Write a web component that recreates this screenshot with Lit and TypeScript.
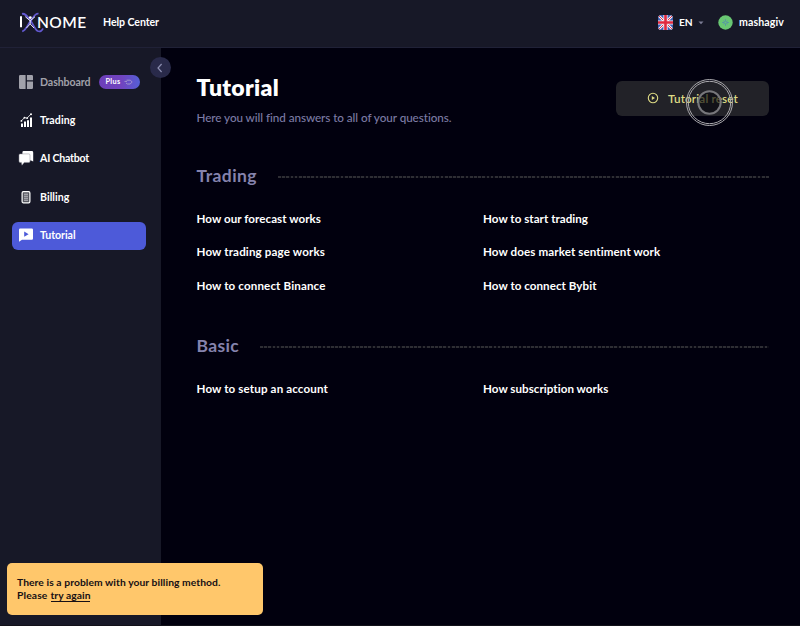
import { LitElement, html, css, svg } from "lit";
import { customElement, property } from "lit/decorators.js";

/* Single line of text tracked so that it fills a given width. */
@customElement("fit-text")
class FitText extends LitElement {
  @property({ type: Number }) w = 0;
  @property() text = "";
  static styles = css`
    :host { display: inline-block; white-space: nowrap; }
    .t { display: inline-block; }
  `;
  render() {
    return html`<span class="t">${this.text}</span>`;
  }
  updated() {
    const el = this.renderRoot.querySelector(".t") as HTMLElement;
    el.style.letterSpacing = "0px";
    const natural = el.getBoundingClientRect().width;
    const gap = (this.w - natural) / this.text.length;
    el.style.letterSpacing = `${gap.toFixed(3)}px`;
  }
}

const t = (text: string, w: number) => html`<fit-text .text=${text} .w=${w}></fit-text>`;

const icons = {
  dashboard: svg`<path d="M0 1.2Q0 0 1.2 0H6.6V14H1.2Q0 14 0 12.8ZM7.9 0H12.8Q14 0 14 1.2V5.2H7.9ZM7.9 6.6H14V12.8Q14 14 12.8 14H7.9Z" fill="#a1a1aa"/>`,
  trading: svg`<path d="M2 10.4h2V14H2zM5 8.4h2V14H5zM8 7.2h2V14H8zM11 4.6h2V14h-2z" fill="#fff"/><path d="M2.2 8 5.6 4.6 8 5.2 12 1" fill="none" stroke="#fff" stroke-width=".8"/><circle cx="2.4" cy="7.9" r=".9" fill="#fff"/><circle cx="5.4" cy="4.7" r=".9" fill="#fff"/><circle cx="8.2" cy="5.1" r=".9" fill="#fff"/><circle cx="12" cy="1.2" r="1" fill="#fff"/>`,
  chat: svg`<path d="M4.6.1H12.8Q14.2.1 14.2 1.5V10.6L12 9.6H4.6Q3.4 9.6 3.4 8.2V1.5Q3.4.1 4.6.1Z" fill="#fff"/><path d="M1.2 2.9H9.8Q11 2.9 11 4.1V10.2Q11 11.4 9.8 11.4H5.2L3 14.2 2.4 11.4H1.2Q0 11.4 0 10.2V4.1Q0 2.9 1.2 2.9Z" fill="#fff" stroke="#8b8b95" stroke-width=".5"/>`,
  billing: svg`<rect x="3.1" y="1.6" width="7.8" height="11.2" rx="1.3" fill="#55565f" stroke="#fff" stroke-width="1.2"/><path d="M5 4.2h4M5 6.2h4M5 8.2h4M5 10.2h4" stroke="#d0d0d6" stroke-width=".9"/>`,
  tutorial: svg`<path d="M1.2.6H12.8Q14 .6 14 1.8V10.6Q14 11.8 12.8 11.8H3L0 13.8V1.8Q0 .6 1.2.6Z" fill="#fff"/><path d="M5.2 3.6 9.6 6.2 5.2 8.8Z" fill="#4c5ad9"/>`,
};

const nav: [keyof typeof icons, string, number][] = [
  ["dashboard", "Dashboard", 50.5],
  ["trading", "Trading", 35.5],
  ["chat", "AI Chatbot", 49],
  ["billing", "Billing", 29.5],
  ["tutorial", "Tutorial", 35.5],
];

const sections = [
  {
    title: "Trading", w: 60.5, cls: "s1",
    links: [
      ["How our forecast works", 124.5], ["How to start trading", 105],
      ["How trading page works", 128.5], ["How does market sentiment work", 177.5],
      ["How to connect Binance", 129], ["How to connect Bybit", 113.5],
    ] as [string, number][],
  },
  {
    title: "Basic", w: 42.5, cls: "s2",
    links: [["How to setup an account", 131.5], ["How subscription works", 125.5]] as [string, number][],
  },
];

@customElement("app-root")
class AppRoot extends LitElement {
  static styles = css`
    :host {
      display: flex; flex-direction: column; position: relative;
      width: 800px; height: 626px; overflow: hidden; box-sizing: border-box;
      background: #01000e; color: #fff; border-bottom: 1px solid #121119;
      font: 700 10.6px/14px Lato, "Open Sans", sans-serif;
    }
    * { box-sizing: border-box; }
    svg { display: block; flex: none; }
    header {
      height: 48px; flex: none; display: flex; align-items: center;
      padding: 0 16px 3px 19px; background: #171827; border-bottom: 1.5px solid #202137;
    }
    .logo { display: flex; align-items: center; width: 67px; height: 22px; position: relative; }
    .logo svg { position: absolute; left: 0; top: 0; }
    .word { font-weight: 600; font-size: 15.5px; line-height: 21px; padding-left: 18px; }
    .help { margin-left: 17px; }
    .right { margin-left: auto; display: flex; align-items: center; }
    .en { margin-left: 6px; width: 14px; font-size: 10.2px; }
    .caret { margin: 1px 0 0 5px; }
    .avatar { margin: 0 6px 0 14px; }
    .body { flex: 1; display: flex; min-height: 0; }
    nav {
      width: 161px; flex: none; background: #171827; padding: 20px 15px 0 12px;
      display: flex; flex-direction: column; gap: 10.4px; position: relative;
    }
    .item { height: 28px; display: flex; align-items: center; padding: 0 0 1px 7px; gap: 7px; border-radius: 6px; flex: none; }
    .item.active { background: #4d5ad9; }
    .item.off { color: #a1a1aa; }
    .plus {
      display: flex; align-items: center; justify-content: center; gap: 3px; color: #fff;
      width: 41px; height: 14px; border-radius: 7px; margin-left: 1px; font: 700 7.3px/14px Lato, sans-serif;
      background: linear-gradient(90deg, #6d3fb9, #7144c0 55%, #5560d5);
    }
    .collapse {
      position: absolute; right: -10px; top: 9px; width: 21px; height: 21px; border-radius: 50%;
      background: #292a4a; display: flex; align-items: center; justify-content: center;
    }
    main { flex: 1; padding: 25px 31px 0 35.5px; }
    .top { display: flex; justify-content: space-between; }
    h1 { margin: 0; font: 800 23px/28px Lato, sans-serif; }
    .sub { margin-top: 9px; font: 500 11.7px/15px Lato, sans-serif; color: #7c7ba4; }
    .reset {
      margin-top: 8px; width: 153px; height: 34.5px; border-radius: 6px; background: #222228;
      color: #dedb85; display: flex; align-items: center; gap: 9px; padding: 0 0 1px 31px;
      font-weight: 600; font-size: 11.7px; position: relative;
    }
    .cursor { position: absolute; left: 68.5px; top: -3.5px; }
    .head { display: flex; align-items: center; gap: 21px; height: 24px; color: #8583ad; font-weight: 700; font-size: 17.5px; line-height: 24px; }
    .dash { flex: 1; height: 2px; margin-top: 2px; background: repeating-linear-gradient(90deg, #2e2e34 0 2.8px, #0b0a15 2.8px 4.17px); }
    .s1 { margin-top: 38.5px; }
    .s2 { margin-top: 41px; }
    .links { display: grid; grid-template-columns: 286.5px 1fr; row-gap: 19.5px; margin-top: 24px; font-size: 11.6px; }
    .links > div { height: 14px; }
    .toast {
      position: absolute; left: 7px; top: 562.5px; width: 255.5px; height: 52.5px; border-radius: 5px;
      background: #ffc76b; color: #171014; padding: 13px 10px; font-size: 10.3px; line-height: 13.5px;
    }
    .toast .row { display: flex; gap: 3px; }
    .again { border-bottom: 1px solid #171014; height: 12.5px; }
  `;

  render() {
    return html`
      <header>
        <div class="logo">
          <svg width="26" height="22" viewBox="0 0 26 22" fill="none">
            <path d="M2 5.2V16.2" stroke="#fff" stroke-width="2"/>
            <path d="M3 2.8C6 2.2 8 5 11 8.8S15.5 18.4 18.6 20C21 21 23 20 24 17.5" stroke="#6258cf" stroke-width="1.8"/>
            <path d="M19.5 2.6C16 2.2 14.5 6 11.5 10S7 19.6 3.2 20.3" stroke="#6258cf" stroke-width="1.8"/>
            <path d="M6.3 5.7 11.2 9.8 16 5.7M11.2 9.5V13L7.4 17M11.2 13 15 17" stroke="#e9e8fa" stroke-width="1"/>
            <circle cx="11.3" cy="6.6" r="1.4" fill="#fff"/>
          </svg>
          <span class="word">${t("NOME", 49.5)}</span>
        </div>
        <div class="help">${t("Help Center", 56)}</div>
        <div class="right">
          <svg width="15" height="15" viewBox="0 0 15 15">
            <clipPath id="f"><rect width="15" height="15" rx="3.5"/></clipPath>
            <g clip-path="url(#f)">
              <rect width="15" height="15" fill="#3e5fb4"/>
              <path d="M0 0 15 15M15 0 0 15" stroke="#f4eff5" stroke-width="2.6"/>
              <path d="M0 0 15 15M15 0 0 15" stroke="#e0344d" stroke-width="1"/>
              <path d="M7.5 0V15M0 7.5H15" stroke="#f4eff5" stroke-width="4.2"/>
              <path d="M7.5 0V15M0 7.5H15" stroke="#e0283f" stroke-width="2.6"/>
            </g>
          </svg>
          <div class="en">${t("EN", 13.5)}</div>
          <svg class="caret" width="6" height="4" viewBox="0 0 6 4"><path d="M.5.5H5.5L3 3.3Z" fill="#7c7d95"/></svg>
          <svg class="avatar" width="15" height="15" viewBox="0 0 15 15">
            <circle cx="7.5" cy="7.5" r="7.2" fill="#69c773"/>
            <path d="M7.5 4.2V10.8M4.2 7.5H10.8M5.4 5.8 7.5 7.5 9.6 5.8M5.4 9.2 7.5 7.5 9.6 9.2" stroke="#5793a8" stroke-width="1" fill="none"/>
            <circle cx="7.5" cy="7.5" r="1.1" fill="#69c773"/>
          </svg>
          ${t("mashagiv", 45)}
        </div>
      </header>
      <div class="body">
        <nav>
          ${nav.map(([icon, label, w], i) => html`
            <div class="item ${i === 0 ? "off" : ""} ${i === 4 ? "active" : ""}">
              <svg width="14" height="14" viewBox="0 0 14 14" overflow="visible">${icons[icon]}</svg>
              ${t(label, w)}
              ${i === 0 ? html`<span class="plus">${t("Plus", 15)}
                <svg width="9" height="6" viewBox="0 0 9 6" fill="none" stroke="#a79bd0" stroke-width=".9"><path d="M.5 2.4H3M2.6 1.2H6.4L8.2 3 6.2 5H3.4L2 4"/></svg></span>` : ""}
            </div>`)}
          <div class="collapse"><svg width="7" height="10" viewBox="0 0 7 10" fill="none" stroke="#8c8eb0" stroke-width="1.2"><path d="M4.6 1 1 5 4.6 9"/></svg></div>
        </nav>
        <main>
          <div class="top">
            <div>
              <h1>${t("Tutorial", 82.5)}</h1>
              <div class="sub">${t("Here you will find answers to all of your questions.", 255)}</div>
            </div>
            <div class="reset">
              <svg width="12" height="12" viewBox="0 0 12 12"><circle cx="6" cy="6" r="4.7" fill="none" stroke="#dedb85" stroke-width="1.1"/><path d="M4.8 4 8 6 4.8 8Z" fill="#dedb85"/></svg>
              ${t("Tutorial reset", 70)}
              <svg class="cursor" width="49" height="49" viewBox="0 0 49 49" fill="none">
                <circle cx="24.5" cy="24.5" r="23" stroke="#aaa9ad" stroke-width="1"/>
                <circle cx="24.5" cy="24.5" r="21.2" stroke="#aaa9ad" stroke-width="1"/>
                <circle cx="24.5" cy="24.5" r="11.2" fill="#09090e" fill-opacity=".65" stroke="#77777b" stroke-width="2"/>
              </svg>
            </div>
          </div>
          ${sections.map((s) => html`
            <section class=${s.cls}>
              <div class="head">${t(s.title, s.w)}<div class="dash"></div></div>
              <div class="links">${s.links.map(([l, w]) => html`<div>${t(l, w)}</div>`)}</div>
            </section>`)}
        </main>
      </div>
      <div class="toast">
        <div>${t("There is a problem with your billing method.", 203.5)}</div>
        <div class="row"><span>${t("Please", 30.5)}</span><span class="again">${t("try again", 40)}</span></div>
      </div>
    `;
  }
}
